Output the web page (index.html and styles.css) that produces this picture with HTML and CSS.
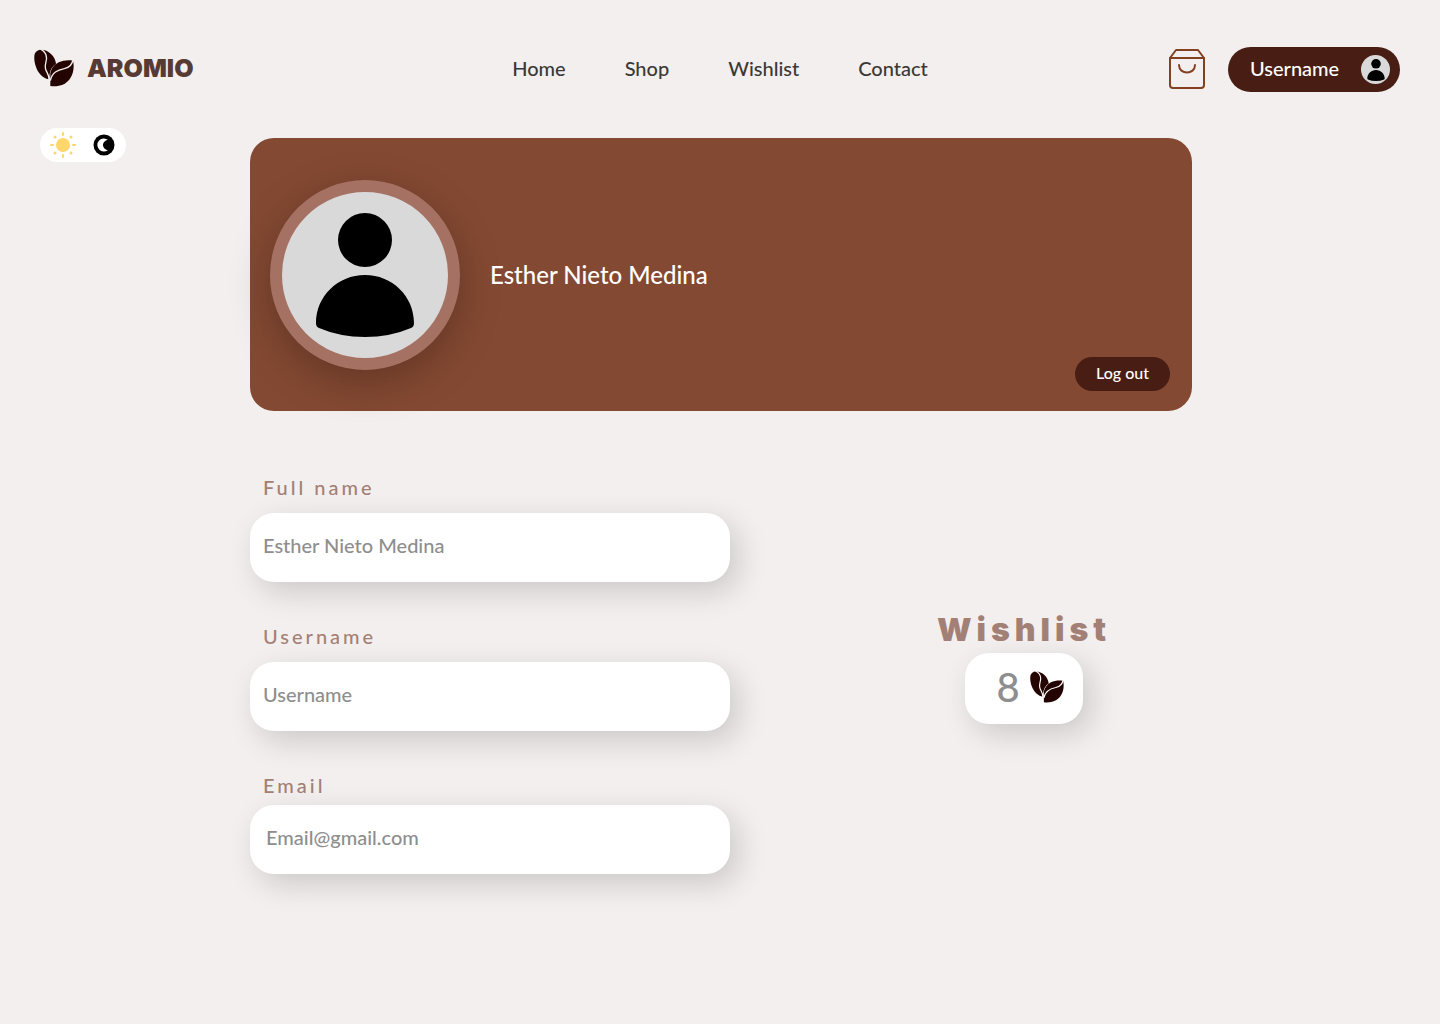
FILE: index.html
```html
<!DOCTYPE html>
<html lang="en">
<head>
  <meta charset="utf-8">
  <meta name="viewport" content="width=device-width, initial-scale=1">
  <title>Aromio – Profile</title>
  <link rel="stylesheet" href="styles.css">
</head>
<body>
  <svg class="symbols" aria-hidden="true">
    <symbol id="beans" viewBox="42 54 120 112">
      <path class="bean" d="M64 55C84 55 107 74 108 98C98 104 91 114 89 128L87 144C72 142 58 130 50 112C44 99 42 84 43 74C44 62 52 55 64 55Z"/>
      <path class="crease" d="M61 53C74 60 82 70 79 86C77 98 73 106 78 117C82 126 88 132 87 146"/>
      <path class="bean" d="M91 164L91 144L91 126C93 112 103 100 116 93C129 87 145 85 159 88C163 106 161 126 150 142C137 160 116 167 91 164Z"/>
      <path class="crease" d="M159 84C157 101 149 108 133 112C113 116 96 123 91 148"/>
    </symbol>
    <symbol id="person" viewBox="0 0 98 124">
      <circle cx="49" cy="27" r="27"/>
      <path d="M0 110C0 83 22 62 49 62S98 83 98 110Q98 114 95 115Q74 124 49 124T3 115Q0 114 0 110Z"/>
    </symbol>
  </svg>

  <header class="header">
    <a class="brand" href="#">
      <svg class="brand-icon" aria-hidden="true"><use href="#beans"/></svg>
      <span class="brand-name">AROMIO</span>
    </a>
    <nav class="nav" aria-label="Main">
      <a href="#">Home</a>
      <a href="#">Shop</a>
      <a href="#">Wishlist</a>
      <a href="#">Contact</a>
    </nav>
    <div class="actions">
      <button class="bag" type="button" aria-label="Shopping bag">
        <svg width="38" height="42" viewBox="0 0 38 42" fill="none" stroke="#844020" stroke-width="2" stroke-linejoin="round" stroke-linecap="round" aria-hidden="true">
          <path d="M2 9L8 1H30L36 9V36Q36 39 33 39H5Q2 39 2 36Z"/>
          <path d="M2 9H36M11 16C11 26 27 26 27 16"/>
        </svg>
      </button>
      <button class="account" type="button">
        <span>Username</span>
        <span class="account-photo"><svg aria-hidden="true"><use href="#person"/></svg></span>
      </button>
    </div>
  </header>

  <main class="main">
    <button class="theme" type="button" aria-label="Switch theme">
      <svg width="26" height="28" viewBox="-13 -14 26 28" aria-hidden="true">
        <g fill="none" stroke="#ffd66b" stroke-width="3" stroke-linecap="round">
          <path stroke-width="2" d="M0-12V-10M0 10V12M-12 0H-10M10 0H12"/>
          <path d="M-8-8L-8-8M8-8L8-8M-8 8L-8 8M8 8L8 8"/>
        </g>
        <circle r="7" fill="#ffd66b"/>
      </svg>
      <svg width="22" height="22" viewBox="0 0 22 22" aria-hidden="true">
        <circle cx="11" cy="11" r="10.500"/>
        <path fill="#fff" d="M15 6A6.500 6.500 0 1 0 15 16C13 16 10 14 10 11S13 6 15 6Z"/>
      </svg>
    </button>

    <div class="content">
      <section class="profile">
        <div class="avatar"><svg aria-hidden="true"><use href="#person"/></svg></div>
        <h1 class="profile-name">Esther Nieto Medina</h1>
        <button class="logout" type="button">Log out</button>
      </section>

      <div class="details">
        <form class="form">
          <div class="field">
            <label for="name">Full name</label>
            <input id="name" type="text" placeholder="Esther Nieto Medina">
          </div>
          <div class="field">
            <label for="user">Username</label>
            <input id="user" type="text" placeholder="Username">
          </div>
          <div class="field field-email">
            <label for="email">Email</label>
            <input id="email" type="email" placeholder="Email@gmail.com">
          </div>
        </form>
        <section class="wishlist">
          <h2>Wishlist</h2>
          <div class="count">
            <span>8</span>
            <svg aria-hidden="true"><use href="#beans"/></svg>
          </div>
        </section>
      </div>
    </div>
  </main>
</body>
</html>
```
FILE: styles.css
```css
:root {
  --page: #f3efee;
  --brown: #844932;
  --dark: #481e14;
  --label: #a38075;
  --muted: #8e8e8e;
  --shadow: 8px 10px 30px rgba(0, 0, 0, 0.16);
}

* {
  box-sizing: border-box;
}

body {
  margin: 0;
  background: var(--page);
  font-family: Lato, sans-serif;
  font-size: 20px;
  line-height: 28px;
}

button {
  border: 0;
  padding: 0;
  font: inherit;
  cursor: pointer;
}

.symbols {
  display: none;
}

.bean {
  fill: #230400;
}

.crease {
  fill: none;
  stroke: var(--crease, #f3efee);
  stroke-width: 4px;
}

.header {
  display: grid;
  grid-template-columns: 1fr auto 1fr;
  align-items: center;
  padding: 47px 34px 36px;
}

.brand {
  display: flex;
  align-items: center;
  gap: 13px;
  padding-bottom: 4px;
  text-decoration: none;
}

.brand-icon {
  width: 40px;
  height: 38px;
}

.brand-name {
  color: #573a33;
  font-family: Inter, sans-serif;
  font-size: 25px;
  font-weight: 900;
}

.nav {
  display: flex;
  gap: 59px;
  padding-bottom: 4px;
}

.nav a {
  color: #3a3937;
  font-weight: 500;
  text-decoration: none;
}

.actions {
  display: flex;
  justify-content: flex-end;
  align-items: center;
  gap: 22px;
  padding-right: 6px;
}

.bag {
  display: flex;
  background: none;
}

.account {
  display: flex;
  align-items: center;
  justify-content: space-between;
  width: 172px;
  height: 45px;
  padding: 0 10px 0 22px;
  border-radius: 24px;
  background: var(--dark);
  color: #fff;
  font-weight: 500;
  line-height: 24px;
}

.account > span:first-child {
  padding-bottom: 3px;
}

.account-photo {
  display: grid;
  place-items: center;
  width: 29px;
  height: 29px;
  border-radius: 50%;
  background: #d9d9d9;
}

.account-photo svg {
  width: 18px;
  height: 22px;
}

.main {
  display: grid;
  grid-template-columns: 210px minmax(0, 1fr) 208px;
  align-items: start;
  padding: 0 40px 40px;
}

.theme {
  display: flex;
  align-items: center;
  justify-content: space-between;
  width: 86px;
  height: 34px;
  padding: 0 11px 0 10px;
  border-radius: 17px;
  background: #fff;
}

.content {
  padding-top: 10px;
}

.profile {
  display: flex;
  align-items: center;
  gap: 30px;
  min-height: 273px;
  padding: 20px 22px 20px 20px;
  border-radius: 24px;
  background: var(--brown);
  color: #fff;
}

.avatar {
  display: grid;
  place-items: center;
  width: 190px;
  height: 190px;
  border: 12px solid #a57163;
  border-radius: 50%;
  background: #d9d9d9;
  box-shadow: 0 12px 40px rgba(0, 0, 0, 0.25);
}

.avatar svg {
  width: 98px;
  height: 124px;
}

.profile-name {
  flex: 1;
  margin: 0;
  font-size: 24px;
  font-weight: 500;
}

.logout {
  align-self: flex-end;
  width: 95px;
  height: 34px;
  padding-bottom: 2px;
  border-radius: 17px;
  background: var(--dark);
  color: #fff;
  font-size: 16px;
  font-weight: 500;
}

.details {
  display: grid;
  grid-template-columns: minmax(0, 480px) 1fr;
  gap: 126px;
  align-items: center;
  padding-top: 62px;
}

.form {
  display: grid;
  gap: 40px;
}

.field {
  display: grid;
  gap: 12px;
}

.field label {
  padding-left: 13px;
  color: var(--label);
  font-weight: 500;
  letter-spacing: 3px;
}

.field input {
  width: 100%;
  height: 69px;
  padding: 0 13px 5px;
  border: 0;
  border-radius: 24px;
  background: #fff;
  box-shadow: var(--shadow);
  color: var(--muted);
  font: inherit;
  font-weight: 500;
}

.field input::placeholder {
  color: var(--muted);
}

.field-email {
  gap: 6px;
}

.field-email input {
  padding-left: 16px;
}

.wishlist {
  display: grid;
  justify-items: center;
  gap: 3px;
  padding-bottom: 13px;
}

.wishlist h2 {
  margin: 0;
  color: var(--label);
  font-family: Inter, sans-serif;
  font-size: 32px;
  font-weight: 900;
  line-height: 40px;
  letter-spacing: 5px;
}

.count {
  --crease: #fff;
  display: flex;
  align-items: center;
  justify-content: center;
  gap: 10px;
  width: 118px;
  height: 71px;
  padding: 0 0 3px 12px;
  border-radius: 24px;
  background: #fff;
  box-shadow: var(--shadow);
  color: var(--muted);
  font-size: 40px;
  font-weight: 500;
}

.count svg {
  width: 34px;
  height: 32px;
}
```
